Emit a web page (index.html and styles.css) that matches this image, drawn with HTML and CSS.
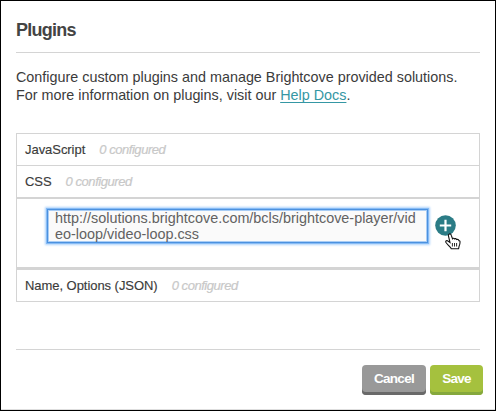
FILE: index.html
```html
<!DOCTYPE html>
<html lang="en">
<head>
<meta charset="utf-8">
<title>Plugins</title>
<link rel="stylesheet" href="styles.css">
</head>
<body>
<main class="dialog">
  <h1 class="title">Plugins</h1>
  <p class="intro">Configure custom plugins and manage Brightcove provided solutions.<br>For more information on plugins, visit our <a href="#">Help Docs</a>.</p>
  <section class="list">
    <div class="row"><span class="name">JavaScript</span><em>0 configured</em></div>
    <div class="row"><span class="name">CSS</span><em>0 configured</em></div>
    <div class="editor">
      <div class="field">http://solutions.brightcove.com/bcls/brightcove-player/vid<br>eo-loop/video-loop.css</div>
      <div class="add">
        <svg class="plus" viewBox="0 0 21 21"><circle cx="10.5" cy="10.5" r="10.3"/><path d="M10.5 4.8v11.4M4.8 10.5h11.4"/></svg>
        <svg class="pointer" viewBox="0 0 16 17"><path d="M4 1.2c1-.7 1.9 0 2.2 1l1.3 3.6c.5-.8 1.6-.7 2 .1.7-.6 1.7-.3 2.1.6 1.1-.4 2 .1 2.3 1.1.6-.1 1.1.3 1.1 1 .1 1.8-.1 3.1-.9 4.6l-.5 2.6H6.2L5.6 14.600 3 12 1 9.500C.3 8.200 1.300 7.300 2.500 7.800L5 9.500 3.500 3.200C3.300 2.400 3.300 1.600 4 1.200z"/><path class="fingers" d="M7.400 10v3.500M9.500 10v3.500M11.600 10v3.500"/></svg>
      </div>
    </div>
    <div class="row last"><span class="name options">Name, Options (JSON)</span><em>0 configured</em></div>
  </section>
  <footer class="actions">
    <button class="cancel">Cancel</button>
    <button class="save">Save</button>
  </footer>
</main>
</body>
</html>
```
FILE: styles.css
```css
* { box-sizing: border-box; }
body {
  margin: 0;
  width: 496px;
  height: 411px;
  background: #fff;
  color: #3b3b3b;
  font-family: "Liberation Sans", Arial, sans-serif;
}
.dialog {
  display: flex;
  flex-direction: column;
  height: 411px;
  padding: 15px 15px 0;
  border: 1px solid #000;
  box-shadow: inset 0 -1px #dedede;
}
.title {
  margin: 0;
  height: 37px;
  width: 464px;
  padding-top: 1px;
  border-bottom: 1px solid #d4d4d4;
  color: #444;
  font-size: 18px;
  line-height: 27px;
  letter-spacing: -.75px;
}
.intro {
  margin: 15px 0 0;
  height: 65px;
  font-size: 14.37px;
  line-height: 18px;
  white-space: nowrap;
}
.intro a { color: #3597a4; text-underline-offset: 2px; text-decoration-skip-ink: none; }
.list {
  width: 464px;
  height: 169px;
  border: 1px solid #d4d4d4;
}
.row {
  display: flex;
  align-items: center;
  height: 32px;
  padding-left: 8px;
  border-bottom: 1px solid #d4d4d4;
  font-size: 13px;
}
.row em {
  margin-left: 14px;
  color: #c8c8c8;
  letter-spacing: -.45px;
  -webkit-text-stroke: .2px #c8c8c8;
}
.row.last { height: 31px; padding-bottom: 1px; border-bottom: 0; }
.name {
  letter-spacing: -.05px;
  -webkit-text-stroke: .15px #3b3b3b;
}
.editor {
  display: flex;
  height: 72px;
  padding: 10px 0 0 30px;
  border-top: 1px solid #d4d4d4;
  border-bottom: 3px solid #d4d4d4;
}
.field {
  width: 381px;
  height: 34px;
  padding: 0 7px;
  border: 1px solid #4b91df;
  background: #fafafa;
  box-shadow: 0 0 0 1px #86bbf5, 0 0 2px 2px #afd3fb, inset 0 0 0 1px #a9cdf5;
  color: #626262;
  font-size: 14.4px;
  line-height: 16px;
  white-space: nowrap;
}
.add {
  position: relative;
  width: 21px;
  height: 21px;
  margin: 6px 0 0 6.5px;
}
.plus { display: block; width: 21px; height: 21px; }
.plus circle { fill: #2b7c86; }
.plus path { stroke: #fff; stroke-width: 2.2; }
.pointer {
  position: absolute;
  left: 10px;
  top: 18px;
  width: 16px;
  height: 17px;
}
.pointer path { fill: #fff; stroke: #111; stroke-width: 1.1; }
.pointer .fingers { fill: none; stroke-width: .9; }
.actions {
  display: flex;
  gap: 4px;
  width: 467px;
  margin-top: 47px;
  padding-top: 16px;
  justify-content: flex-end;
  background: linear-gradient(#d4d4d4, #d4d4d4) 0 0 / 464px 1px no-repeat;
}
button {
  height: 30px;
  padding: 0 0 2px;
  border: 0;
  border-radius: 4px;
  color: #fff;
  font: bold 13.5px/26px "Liberation Sans", Arial, sans-serif;
  letter-spacing: -.7px;
}
.cancel { width: 64px; background: #999; box-shadow: inset 0 -3px #696969; }
.save { width: 53px; background: #a5c13e; box-shadow: inset 0 -3px #85a83d; }
```
